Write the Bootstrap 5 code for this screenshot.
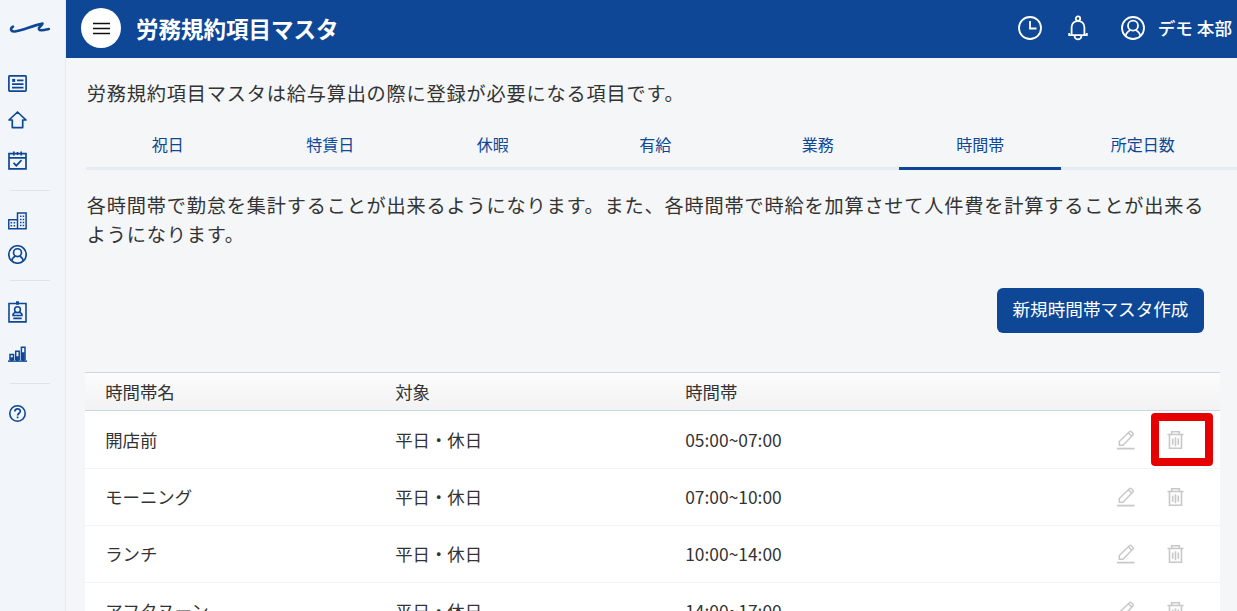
<!DOCTYPE html>
<html lang="ja">
<head>
<meta charset="utf-8">
<meta name="viewport" content="width=device-width, initial-scale=1">
<title>労務規約項目マスタ</title>
<link href="https://cdn.jsdelivr.net/npm/bootstrap@5.3.0/dist/css/bootstrap.min.css" rel="stylesheet">
<style>
:root{--navy:#0e4796}
body{font-family:"Noto Sans CJK JP",sans-serif;color:#333;background:#f4f6f8;height:611px}
svg{display:block;flex:none;fill:none;stroke:currentColor}
.side{width:66px;background:#f2f6fb;border-right:1px solid #e3e8f1;color:var(--navy);padding-left:8px}
.side hr{width:40px;margin:0 0 0 2px;border-color:#dfe3ea;opacity:1}
.topbar{height:58px;background:var(--navy);padding:0 5px 2px 15px}
.menu-btn{width:40px;height:40px;color:#111}
.page-title{font-size:22.5px;line-height:34px;margin-left:15px}
.user-name{font-size:17.6px;font-weight:500;margin-left:13px}
.content-area{padding-left:19px}
.intro{font-size:19.2px;letter-spacing:.8px;line-height:29px;padding-left:1.8px;padding-top:21px;width:1127px}
.tabs{border-bottom:3px solid #e5eaf3;height:45px;margin:17px 0 0 1px}
.tabs .nav-link{width:162.5px;height:45px;padding:7px 0 0 1px;text-align:center;font-size:16px;line-height:24px;color:var(--navy);border-bottom:3px solid transparent}
.tabs .nav-link.active{border-color:var(--navy)}
.create-btn{width:207px;height:45px;background:var(--navy);color:#fff;font-size:17.6px;line-height:26px;padding:8px 0 11px;border:0;border-radius:6px}
.grid-list{width:1135px;font-size:17.4px;margin-top:39px}
.grid-head{height:39px;border:solid #c9d8e8;border-width:1px 0;background:linear-gradient(#fcfcfd,#f2f2f2);padding-top:2px}
.grid-row{height:57px;background:#fff;border-bottom:1px solid #f3f4f6}
.grid-row:nth-child(2){height:58px;padding-top:1px}
.cell{width:290px;padding-left:20.2px}
.tools{color:#c8c8c8;margin-left:auto;padding-right:36px;gap:32px}
.marker{left:-16px;top:-17px;width:62px;height:53px;border:8px solid #e60000;border-radius:4px}
</style>
</head>
<body class="d-flex overflow-hidden">
<svg width="0" height="0" class="position-absolute">
<symbol id="user" viewBox="0 0 24 24"><circle cx="12" cy="12" r="11"/><circle cx="12" cy="9.7" r="5"/><path d="M4.7 20C5.3 16.5 7.7 14.8 9.5 14M19.3 20C18.7 16.5 16.3 14.8 14.5 14"/></symbol>
<symbol id="pen" viewBox="0 0 18 20"><path d="M0 18.6h17.5" stroke-width="1.8"/><path d="M2.3 15.3V11.5L12.4 1.7Q13.4.8 14.3 1.7L15.9 3.3Q16.7 4.2 15.9 5L6 15.3Z M11.6 3l3.1 3.1" stroke-width="1.5"/></symbol>
<symbol id="trash" viewBox="0 0 16 20"><path d="M0 4.5h16M4.2 4.5V1.7h7.6v2.8M2 5v13.2h12V5M8 7.2v9M5.2 8.5v6.3M10.8 8.5v6.3" stroke-width="1.6"/></symbol>
</svg>

<aside class="side d-flex flex-column flex-shrink-0">
  <svg width="44" height="14" viewBox="0 0 44 14" style="margin-top:21px" stroke-width="2.6" stroke-linecap="round" stroke-linejoin="round"><path d="M5 5.6C1.8 7.6 2.7 11 6.8 10.5C15 9.6 24 4.6 34.5 2.6C34.5 3.8 33.5 4.5 32 5.7C29.8 7.6 31 9.6 34 9.2C36.7 8.9 38.5 8.4 40.8 8"/></svg>
  <svg width="19" height="17" viewBox="0 0 19 17" style="margin-top:40px" stroke-width="1.7"><rect x=".9" y=".8" width="17.2" height="15.3" rx="1"/><path d="M9 5.3h6.5M4 9.2h11.5M4 12.6h11.5"/><path d="M4.2 5.4h3" stroke-width="3"/></svg>
  <svg width="19" height="18" viewBox="0 0 19 18" style="margin-top:19px" stroke-width="1.7" stroke-linejoin="round"><path d="M9.5 1L1 9h3.3v7.6h10.4V9H18Z"/></svg>
  <svg width="19" height="19" viewBox="0 0 19 19" style="margin-top:22px" stroke-width="1.7"><path d="M1 2.7h17v15.2H1ZM1 6.9h17M5.8.5v4M13.2.5v4M9.5.9v3.2"/><path d="M5.5 11.8l2.8 2.9 5.2-5.6"/></svg>
  <hr style="margin-top:20px">
  <svg width="19" height="18" viewBox="0 0 19 18" style="margin-top:21px" stroke-width="1.5"><path d="M9.5 16.8V1h8.6v15.8H.8V7.8h8.7M.8 16.8"/><path d="M12 4.3h1.5m1.2 0h1.5M12 7.4h1.5m1.2 0h1.5M12 10.5h1.5m1.2 0h1.5M12 13.6h1.5m1.2 0h1.5M2.6 10.8h1.6m1.4 0h1.6M2.6 13.8h1.6m1.4 0h1.6"/></svg>
  <svg width="19" height="19" style="margin-top:15px" stroke-width="2.1"><use href="#user"/></svg>
  <hr style="margin-top:16px">
  <svg width="19" height="22" viewBox="0 0 19 22" style="margin-top:20px" stroke-width="1.6"><path d="M1 2.5h17v18.4H1Z"/><path d="M8 2h3" stroke-width="3.4"/><circle cx="9.5" cy="8.7" r="2.9"/><path d="M4.8 14.3q.4-2.6 3.2-3M14.2 14.3q-.4-2.6-3.2-3M4.2 14.5h10.6M5.3 17.4h8.4"/></svg>
  <svg width="19" height="16" viewBox="0 0 19 16" style="margin-top:23px" stroke-width="1.5"><path d="M0 15.1h19"/><path d="M2 14V8.5h3.5V14M7.7 14V5.2h3.5V14M13.4 14V1.3H17V14"/><path d="M3.7 11.3V15M9.4 10.3V15M15.2 6.3V15" stroke-width="3"/></svg>
  <hr style="margin-top:21px">
  <svg width="19" height="19" viewBox="0 0 19 19" style="margin-top:20px" stroke-width="1.6"><circle cx="9.5" cy="9.5" r="7.7"/><path d="M6.9 7.4c0-3.4 5.4-3.4 5.4-.2 0 2-2.7 2.1-2.7 4.4M9.6 12.6v1.6" stroke-width="1.7"/></svg>
</aside>

<main class="flex-grow-1">
  <header class="topbar navbar flex-nowrap text-white">
    <button class="menu-btn btn bg-white rounded-circle p-0 d-flex align-items-center justify-content-center"><svg width="17" height="13" stroke-width="1.4"><path d="M0 1.5h17M0 6.5h17M0 11.5h17"/></svg></button>
    <h1 class="page-title fw-bold mb-0">労務規約項目マスタ</h1>
    <svg class="ms-auto" width="24" height="24" viewBox="0 0 24 24" stroke-width="1.8"><circle cx="12" cy="12" r="11"/><path d="M12 5v7.5h6.5"/></svg>
    <svg width="20" height="26" viewBox="0 0 20 26" style="margin-left:26px" stroke-width="1.8"><circle cx="10" cy="3.6" r="2.2"/><path d="M3.6 20v-7.8a6.4 6.4 0 0112.8 0V20M1.2 18v2.2h17.6V18M6.6 21a3.4 3.4 0 006.8 0"/></svg>
    <svg width="24" height="24" style="margin-left:33px" stroke-width="1.8"><use href="#user"/></svg>
    <span class="user-name">デモ 本部</span>
  </header>
  <div class="content-area">
    <p class="intro mb-0">労務規約項目マスタは給与算出の際に登録が必要になる項目です。</p>
    <nav class="tabs nav flex-nowrap">
      <a class="nav-link">祝日</a><a class="nav-link">特賃日</a><a class="nav-link">休暇</a><a class="nav-link">有給</a><a class="nav-link">業務</a><a class="nav-link active">時間帯</a><a class="nav-link">所定日数</a>
    </nav>
    <p class="intro mb-0">各時間帯で勤怠を集計することが出来るようになります。また、各時間帯で時給を加算させて人件費を計算することが出来るようになります。</p>
    <div class="d-flex justify-content-end" style="padding:39px 33px 0 0"><button class="create-btn btn">新規時間帯マスタ作成</button></div>
    <section class="grid-list">
      <div class="grid-head d-flex align-items-center"><div class="cell">時間帯名</div><div class="cell">対象</div><div class="cell">時間帯</div></div>
      <div class="grid-row d-flex align-items-center"><div class="cell">開店前</div><div class="cell">平日・休日</div><div class="cell">05:00~07:00</div><div class="tools d-flex"><svg width="18" height="20"><use href="#pen"/></svg><div class="position-relative"><svg width="17" height="20"><use href="#trash"/></svg><span class="marker position-absolute"></span></div></div></div>
      <div class="grid-row d-flex align-items-center"><div class="cell">モーニング</div><div class="cell">平日・休日</div><div class="cell">07:00~10:00</div><div class="tools d-flex"><svg width="18" height="20"><use href="#pen"/></svg><svg width="17" height="20"><use href="#trash"/></svg></div></div>
      <div class="grid-row d-flex align-items-center"><div class="cell">ランチ</div><div class="cell">平日・休日</div><div class="cell">10:00~14:00</div><div class="tools d-flex"><svg width="18" height="20"><use href="#pen"/></svg><svg width="17" height="20"><use href="#trash"/></svg></div></div>
      <div class="grid-row d-flex align-items-center"><div class="cell">アフタヌーン</div><div class="cell">平日・休日</div><div class="cell">14:00~17:00</div><div class="tools d-flex"><svg width="18" height="20"><use href="#pen"/></svg><svg width="17" height="20"><use href="#trash"/></svg></div></div>
    </section>
  </div>
</main>
<script src="https://cdn.jsdelivr.net/npm/bootstrap@5.3.0/dist/js/bootstrap.bundle.min.js"></script>
</body>
</html>
